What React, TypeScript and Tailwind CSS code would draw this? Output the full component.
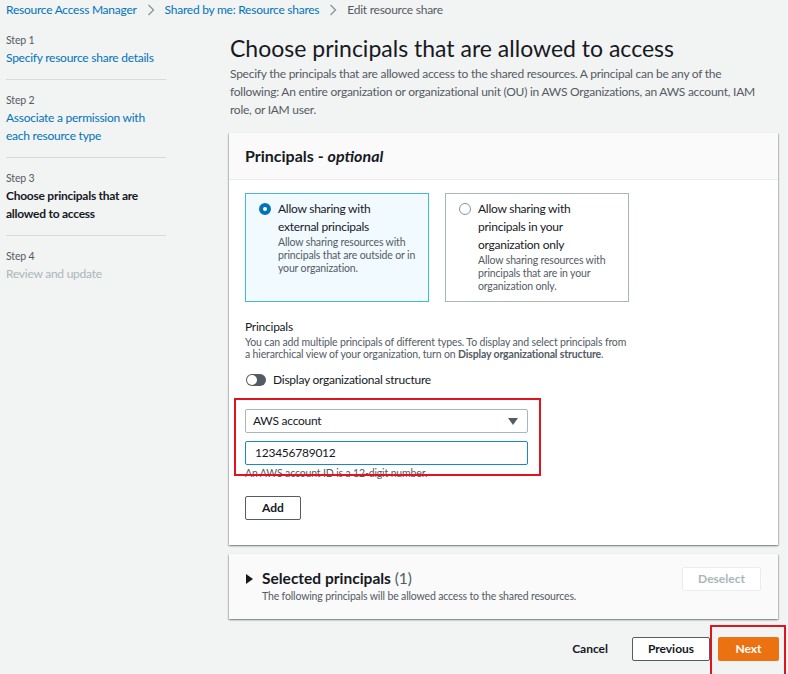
const font = "font-['Lato','Noto_Sans',sans-serif]";
// body text is set a little tighter so Lato matches the console font's width
const body = "text-[12px] tracking-[-0.25px]";
const small = "text-[10.5px] tracking-[-0.15px]";

function Chevron() {
  return (
    <svg width="8" height="12" viewBox="0 0 8 12" className="mx-[10px]">
      <path d="M1.5 1l5 5-5 5" fill="none" stroke="#879596" strokeWidth="1.3" />
    </svg>
  );
}

function Step({ n, children, last }: { n: number; children: React.ReactNode; last?: boolean }) {
  return (
    <div className={last ? "pt-[12px]" : "pt-[12px] pb-[12px] border-b border-[#d5dbdb]"}>
      <div className={`${small} leading-[16px] text-[#545b64]`}>Step {n}</div>
      <div className={`${body} leading-[18px] mt-[1px]`}>{children}</div>
    </div>
  );
}

function Tile({ checked, title, desc }: { checked?: boolean; title: React.ReactNode; desc: React.ReactNode }) {
  return (
    <div
      className={
        checked
          ? "w-[184px] h-[109px] bg-[#f1faff] border border-[#44b9d6] pl-[13px] pt-[6px]"
          : "w-[184px] h-[109px] bg-white border border-[#aab7b8] pl-[13px] pt-[6px]"
      }
    >
      <div className="flex">
        {checked ? (
          <span className="mt-[3px] w-[12px] h-[12px] rounded-full border-[4px] border-[#0073bb] bg-white shrink-0" />
        ) : (
          <span className="mt-[3px] w-[12px] h-[12px] rounded-full border border-[#879596] bg-white shrink-0" />
        )}
        <div className="ml-[7px]">
          <div className={`${body} leading-[18px]`}>{title}</div>
          <div className={`${small} leading-[13px] text-[#545b64]`}>{desc}</div>
        </div>
      </div>
    </div>
  );
}

export default function App() {
  return (
    <div className={`${font} w-[788px] h-[674px] bg-[#f2f3f3] text-[#16191f] overflow-hidden`}>
      {/* breadcrumb */}
      <div className={`flex items-center h-[20px] pl-[6px] ${body} text-[#0073bb]`}>
        <span>Resource Access Manager</span>
        <Chevron />
        <span>Shared by me: Resource shares</span>
        <Chevron />
        <span className="text-[#545b64]">Edit resource share</span>
      </div>

      <div className="flex">
        {/* steps */}
        <div className="w-[160px] ml-[6px] shrink-0">
          <Step n={1}>
            <span className="text-[#0073bb]">Specify resource share details</span>
          </Step>
          <Step n={2}>
            <span className="text-[#0073bb]">
              Associate a permission with
              <br />
              each resource type
            </span>
          </Step>
          <Step n={3}>
            <span className="font-bold text-[#16191f]">
              Choose principals that are
              <br />
              allowed to access
            </span>
          </Step>
          <Step n={4} last>
            <span className="text-[#aab7b8]">Review and update</span>
          </Step>
        </div>

        {/* main */}
        <div className="ml-[63px] w-[549px] pt-[13px]">
          <h1 className="pl-[1px] text-[23px] leading-[30px] text-[#16191f]">
            Choose principals that are allowed to access
          </h1>
          <p className={`pl-[1px] mt-[2px] ${body} leading-[18px] text-[#545b64] whitespace-nowrap`}>
            Specify the principals that are allowed access to the shared resources. A principal can be any of the
            <br />
            following: An entire organization or organizational unit (OU) in AWS Organizations, an AWS account, IAM
            <br />
            role, or IAM user.
          </p>

          {/* principals card */}
          <div className="mt-[14px] bg-white shadow-[0_1px_2px_rgba(0,28,36,0.3),1px_1px_1px_rgba(0,28,36,0.15),-1px_1px_1px_rgba(0,28,36,0.15)]">
            <div className="bg-[#fafafa] border-b border-[#eaeded] px-[16px] h-[47px] flex items-center text-[16px] font-bold">
              Principals -&nbsp;<i>optional</i>
            </div>
            <div className="px-[16px] pt-[13px] pb-[25px]">
              <div className="flex gap-[16px]">
                <Tile
                  checked
                  title={
                    <>
                      Allow sharing with
                      <br />
                      external principals
                    </>
                  }
                  desc={
                    <>
                      Allow sharing resources with
                      <br />
                      principals that are outside or in
                      <br />
                      your organization.
                    </>
                  }
                />
                <Tile
                  title={
                    <>
                      Allow sharing with
                      <br />
                      principals in your
                      <br />
                      organization only
                    </>
                  }
                  desc={
                    <>
                      Allow sharing resources with
                      <br />
                      principals that are in your
                      <br />
                      organization only.
                    </>
                  }
                />
              </div>

              <div className={`mt-[16px] ${body} leading-[18px]`}>Principals</div>
              <div className={`${small} leading-[12px] text-[#545b64] whitespace-nowrap`}>
                You can add multiple principals of different types. To display and select principals from
                <br />
                a hierarchical view of your organization, turn on <b>Display organizational structure</b>.
              </div>

              <div className="mt-[11px] h-[18px] flex items-center">
                <span className="ml-[1px] w-[20px] h-[12px] rounded-full bg-[#545b64] relative">
                  <span className="absolute left-[1px] top-[1px] w-[10px] h-[10px] rounded-full bg-white" />
                </span>
                <span className={`ml-[7px] ${body}`}>Display organizational structure</span>
              </div>

              <div className="relative mt-[20px] w-[283px]">
                <div className={`h-[24px] border border-[#aab7b8] rounded-[2px] flex items-center pl-[7px] pr-[9px] ${body}`}>
                  <span className="flex-1">AWS account</span>
                  <svg width="10" height="7" viewBox="0 0 10 7">
                    <path d="M0 0h10L5 7z" fill="#545b64" />
                  </svg>
                </div>
                <div className={`mt-[8px] h-[24px] border border-[#1a87c8] rounded-[2px] flex items-center px-[9px] ${body}`}>
                  123456789012
                </div>
                <div className={`${small} leading-[16px] text-[#545b64]`}>An AWS account ID is a 12-digit number.</div>
                <div className="absolute left-[-11px] top-[-11px] w-[307px] h-[78px] border-2 border-[#e0131f] pointer-events-none" />
              </div>

              <button className="mt-[15px] w-[56px] h-[24px] border border-[#545b64] rounded-[2px] text-[12px] font-bold text-[#16191f] bg-white">
                Add
              </button>
            </div>
          </div>

          {/* selected principals */}
          <div className="mt-[9px] bg-[#fafafa] h-[65px] flex items-start pl-[16px] pr-[17px] pt-[13px] shadow-[0_1px_2px_rgba(0,28,36,0.3),1px_1px_1px_rgba(0,28,36,0.15),-1px_1px_1px_rgba(0,28,36,0.15)]">
            <div className="flex-1 flex">
              <svg width="8" height="10" viewBox="0 0 8 10" className="mt-[7px] ml-[1px]">
                <path d="M0 0l7 5-7 5z" fill="#16191f" />
              </svg>
              <div className="ml-[8px]">
                <div className="text-[15.5px] leading-[22px] font-bold">
                  Selected principals <span className="font-normal text-[#545b64]">(1)</span>
                </div>
                <div className={`${small} leading-[14px] text-[#545b64]`}>
                  The following principals will be allowed access to the shared resources.
                </div>
              </div>
            </div>
            <button className="w-[79px] h-[24px] border border-[#eaeded] rounded-[2px] bg-white text-[12px] font-bold text-[#aab7b8]">
              Deselect
            </button>
          </div>

          {/* footer */}
          <div className="mt-[18px] flex items-center justify-end text-[12px] font-bold">
            <span className="mr-[24px]">Cancel</span>
            <button className="w-[78px] h-[24px] border border-[#545b64] rounded-[2px] bg-white">Previous</button>
            <div className="relative ml-[8px] mr-[-1px]">
              <button className="w-[61px] h-[24px] rounded-[2px] bg-[#ec7211] text-white">Next</button>
              <div className="absolute left-[-8px] top-[-12px] w-[76px] h-[52px] border-2 border-[#e0131f]" />
            </div>
          </div>
        </div>
      </div>
    </div>
  );
}
